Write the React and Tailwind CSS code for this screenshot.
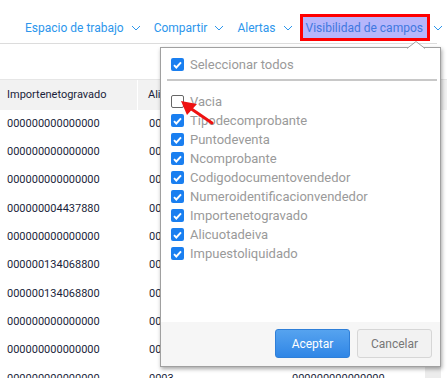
import React from "react";

const fields = [
  { name: "Vacia", checked: false },
  { name: "Tipodecomprobante", checked: true },
  { name: "Puntodeventa", checked: true },
  { name: "Ncomprobante", checked: true },
  { name: "Codigodocumentovendedor", checked: true },
  { name: "Numeroidentificacionvendedor", checked: true },
  { name: "Importenetogravado", checked: true },
  { name: "Alicuotadeiva", checked: true },
  { name: "Impuestoliquidado", checked: true },
];

const rows = [
  ["000000000000000", "0005"],
  ["000000000000000", "0005"],
  ["000000000000000", "0005"],
  ["000000004437880", "0005"],
  ["000000000000000", "0005"],
  ["000000134068800", "0005"],
  ["000000134068800", "0005"],
  ["000000000000000", "0005"],
  ["000000000000000", "0005"],
  ["000000000000000", "0003"],
];

function Chevron({ className = "" }) {
  return (
    <svg width="10" height="6" viewBox="0 0 10 6" className={className}>
      <path d="M1 1l4 4 4-4" fill="none" stroke="currentColor" strokeWidth="1" />
    </svg>
  );
}

function Box({ checked }) {
  if (!checked) {
    return <span className="w-[13px] h-[13px] rounded-[2px] border border-[#666] bg-white shrink-0" />;
  }
  return (
    <span className="w-[13px] h-[13px] rounded-[2px] bg-[#1a7ff0] shrink-0 flex items-center justify-center">
      <svg width="9" height="8" viewBox="0 0 9 8">
        <path d="M1 4.2l2.3 2.3L8 1.3" fill="none" stroke="white" strokeWidth="1.9" />
      </svg>
    </span>
  );
}

function NavItem({ label }) {
  return (
    <div className="flex items-center gap-[7px] text-[#2d96ec] shrink-0 whitespace-nowrap">
      <span>{label}</span>
      <Chevron />
    </div>
  );
}

export default function App() {
  return (
    <div className="relative w-[447px] h-[378px] overflow-hidden bg-white font-['Roboto',sans-serif]">
      {/* top nav */}
      <div className="h-[43px] flex items-center pl-[25px] gap-[13px] text-[12px] pt-[13px] pb-[1px] whitespace-nowrap">
        <NavItem label="Espacio de trabajo" />
        <NavItem label="Compartir" />
        <NavItem label="Alertas" />
        <div className="flex items-center gap-[3px] -ml-[6px] shrink-0">
          <span className="h-[27px] pl-[3px] pr-[4px] flex items-center border-[3px] border-[#ff0000] bg-[#b6b6fb] text-[#4078e0]">
            Visibilidad de campos
          </span>
          <Chevron className="text-[#2d96ec]" />
        </div>
      </div>
      <div className="h-px w-[437px] bg-[#dcdcdc]" />

      {/* table */}
      <div className="mt-[35px] border-t border-[#e6e6e6] text-[11px] text-[#1b1f3b]">
        <div className="h-[30px] flex bg-[#f2f2f2]">
          <div className="w-[138px] pl-[7px] flex items-center border-r border-white">Importenetogravado</div>
          <div className="w-[145px] pl-[10px] flex items-center">Alicuotadeiva</div>
          <div className="flex-1 pl-[9px] flex items-center">Impuestoliquidado</div>
        </div>
        {rows.map((r, i) => (
          <div key={i} className="h-[28.3px] flex">
            <div className="w-[138px] pl-[7px] flex items-center">{r[0]}</div>
            <div className="w-[145px] pl-[11px] flex items-center">{r[1]}</div>
            <div className="flex-1 pl-[9px] flex items-center">000000000000000</div>
          </div>
        ))}
      </div>

      {/* scroll track below panel */}
      <div className="absolute left-[425px] top-[367px] w-[16px] h-[11px] bg-[#ececec]" />

      {/* dropdown panel */}
      <div className="absolute left-[160px] top-[47px] w-[281px] h-[320px] bg-white border border-[#a0a0a0] shadow-[1px_2px_4px_rgba(0,0,0,0.35)] flex flex-col text-[13px] text-[#9a9a9a]">
        {/* caret */}
        <svg className="absolute -top-[7px] left-[246px]" width="18" height="8" viewBox="0 0 18 8">
          <path d="M0 7.5L9 0.5 18 7.5" fill="white" stroke="#a0a0a0" strokeWidth="1" />
        </svg>
        <div className="px-[10px] pt-[9px]">
          <label className="flex items-center gap-[6px] h-[15px]">
            <Box checked />
            <span>Seleccionar todos</span>
          </label>
          <div className="mt-[7px] ml-[-4px] w-[270px] h-[2px] bg-[#c8c8c8]" />
          <div className="pt-[11px] flex flex-col">
            {fields.map((f) => (
              <label key={f.name} className="flex items-center gap-[6px] h-[19px]">
                <Box checked={f.checked} />
                <span>{f.name}</span>
              </label>
            ))}
          </div>
        </div>
        <div className="mt-auto h-[44px] bg-[#f6f6f6] flex items-center justify-end gap-[7px] pr-[8px] pb-[1px]">
          <button className="w-[75px] h-[29px] rounded-[3px] border border-[#2f7fd8] bg-gradient-to-b from-[#56a3ef] to-[#2f86e6] text-white text-[12px]">
            Aceptar
          </button>
          <button className="w-[75px] h-[29px] rounded-[3px] border border-[#d6d6d6] bg-[#f2f2f2] text-[#777] text-[12px]">
            Cancelar
          </button>
        </div>
      </div>

      {/* red arrow */}
      <svg className="absolute left-0 top-0 pointer-events-none" width="447" height="378">
        <line x1="212" y1="123" x2="190" y2="108" stroke="#ee1111" strokeWidth="3" strokeLinecap="round" />
        <path d="M181 101 L197 104 L187 115 Z" fill="#ee1111" />
      </svg>
    </div>
  );
}
